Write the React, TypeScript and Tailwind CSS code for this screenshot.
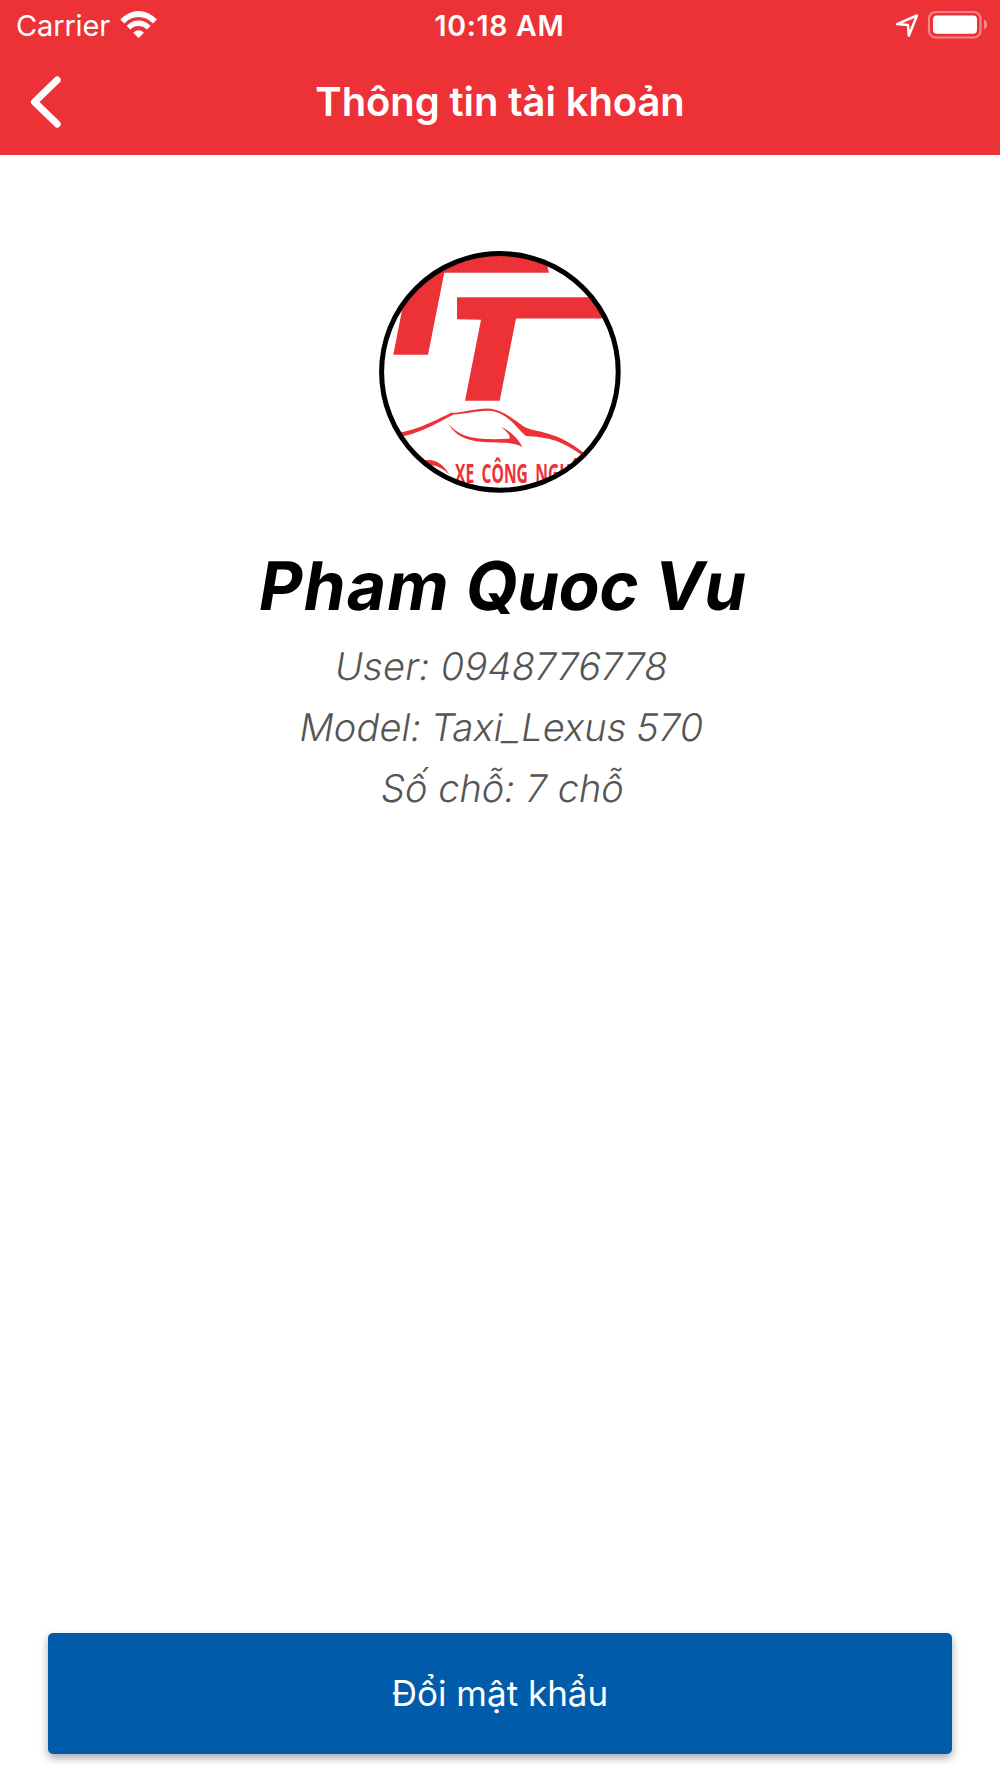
import React from "react";

function WifiIcon() {
  return (
    <svg className="ml-[10px] h-[28px] w-[38px] -translate-y-[2px]" viewBox="120 9 38 28">
      <path fill="#fff" d="M120.3 18.6Q128.5 10 138.6 10T156.9 18.6L152.8 22.4Q146.5 16 138.6 16T124.4 22.4Z" />
      <path fill="#fff" d="M126.6 24.8Q132 19.6 138.6 19.6T150.6 24.8L147 28.4Q143.2 25 138.6 25T130.2 28.4Z" />
      <path fill="#fff" d="M133.4 31.4Q138.6 27 143.8 31.4Q143.6 32.2 138.6 37Q133.6 32.2 133.4 31.4Z" />
    </svg>
  );
}

function StatusIcons() {
  return (
    <div className="flex flex-1 items-center justify-end">
      <svg className="h-[30px] w-[94px] -translate-y-[1.5px]" viewBox="895 9 94 30">
        <path
          d="M917 15L897 23.6L908 24.6L908.8 35.2Z"
          fill="none"
          stroke="#fff"
          strokeWidth="2.5"
          strokeLinejoin="round"
        />
        <rect x="929" y="11.5" width="51.5" height="25.5" rx="6.5" fill="none" stroke="#fff" strokeOpacity=".4" strokeWidth="2.2" />
        <rect x="933" y="15" width="44" height="18.3" rx="4" fill="#fff" />
        <path d="M984 19Q987 20.5 987 24T984 29Z" fill="#fff" fillOpacity=".45" />
      </svg>
    </div>
  );
}

function Avatar() {
  return (
    <svg
      className="mt-[96px] size-[242px]"
      viewBox="379 251 242 242"
      fontFamily='"Open Sans", sans-serif'
      fontWeight="700"
      fontSize="27.5"
    >
      <defs>
        <clipPath id="portrait">
          <circle cx="499.9" cy="371.9" r="118.5" />
        </clipPath>
      </defs>
      <g clipPath="url(#portrait)" fill="#ed3237">
        <path d="M400 250H543L549 272.8H444.3L428 354.8H393.3L404 300Z" />
        <path d="M457 297.3H610V318.6H516L499.7 400.8H465L481 319.8L457 319.2Z" />
        <path d="M395 433.5C420 430 438 418 457 410.5Q448 414 446.5 413.3C459 413.8 475 408.5 488 408.6C506 409.5 520 426 527 428C537 432.5 557 431 584 453L581 454.5C557 438 546 437.5 526 436C517 429 507 411 488 410.8C473 411.5 465 414 453.5 414.5C436 424 419 434 395 438Z" />
        <path d="M448.3 423.5C461 439 478 440 509.5 438.8C511 435 505 430 500.8 426.7Q515 433 522.5 447C511 441.5 504 443.5 485 442C465 441 455 435 448.3 423.5Z" />
        <path d="M422 461Q439 456.5 449.5 475Q439 464 428 465.5Z" />
        <text x="455" y="482.6" textLength="125" lengthAdjust="spacingAndGlyphs" wordSpacing="6">
          XE CÔNG NGHỆ
        </text>
      </g>
      <circle cx="499.9" cy="371.9" r="118.3" fill="none" stroke="#000" strokeWidth="5" />
    </svg>
  );
}

export default function App() {
  return (
    <div className="flex h-[1778px] w-[1000px] flex-col bg-white font-['Inter',sans-serif]">
      <header className="flex h-[154.6px] flex-col bg-[#ed3237] text-white">
        <div className="flex h-[51px] items-center pr-[11px] pl-[16px]">
          <div className="flex flex-1 items-center">
            <span className="text-[29px] leading-[34px] tracking-[-0.15px]">Carrier</span>
            <WifiIcon />
          </div>
          <span className="-translate-x-[3px] text-[28.5px] leading-[34px] font-semibold tracking-[0.7px]">10:18 AM</span>
          <StatusIcons />
        </div>
        <div className="flex h-[102px] items-center px-[30px]">
          <button className="flex flex-1" aria-label="Back">
            <svg className="h-[52px] w-[32px]" viewBox="30 76 32 52">
              <path d="M57.2 80L34.5 102L57.2 124" fill="none" stroke="#fff" strokeWidth="7" strokeLinecap="round" strokeLinejoin="round" />
            </svg>
          </button>
          <h1 className="text-[40px] leading-[48px] font-semibold tracking-[-0.1px]">Thông tin tài khoản</h1>
          <div className="flex-1" />
        </div>
      </header>
      <main className="flex flex-1 flex-col items-center">
        <Avatar />
        <h2 className="mt-[53px] ml-[6px] -skew-x-[9.5deg] text-[67px] leading-[80px] font-bold text-black">
          <span className="tracking-[1.4px]">Pham</span> <span className="tracking-[-0.4px]">Quoc</span> Vu
        </h2>
        <div className="mt-[10px] ml-[4px] text-center text-[38px] leading-[61px] font-light text-[#555]">
          <p className="-skew-x-[9.5deg] tracking-[0.2px]">User: 0948776778</p>
          <p className="-skew-x-[9.5deg] tracking-[0.1px] [word-spacing:-1px]">Model: Taxi_Lexus 570</p>
          <p className="translate-x-[1px] -skew-x-[9.5deg]">Số chỗ: 7 chỗ</p>
        </div>
      </main>
      <footer className="px-[48px] pb-[24px]">
        <button className="flex h-[121px] w-full items-center justify-center rounded-[5px] bg-[#005baa] text-[35px] text-white shadow-[0_4px_9px_rgba(0,0,0,0.35)]">
          Đổi mật khẩu
        </button>
      </footer>
    </div>
  );
}
